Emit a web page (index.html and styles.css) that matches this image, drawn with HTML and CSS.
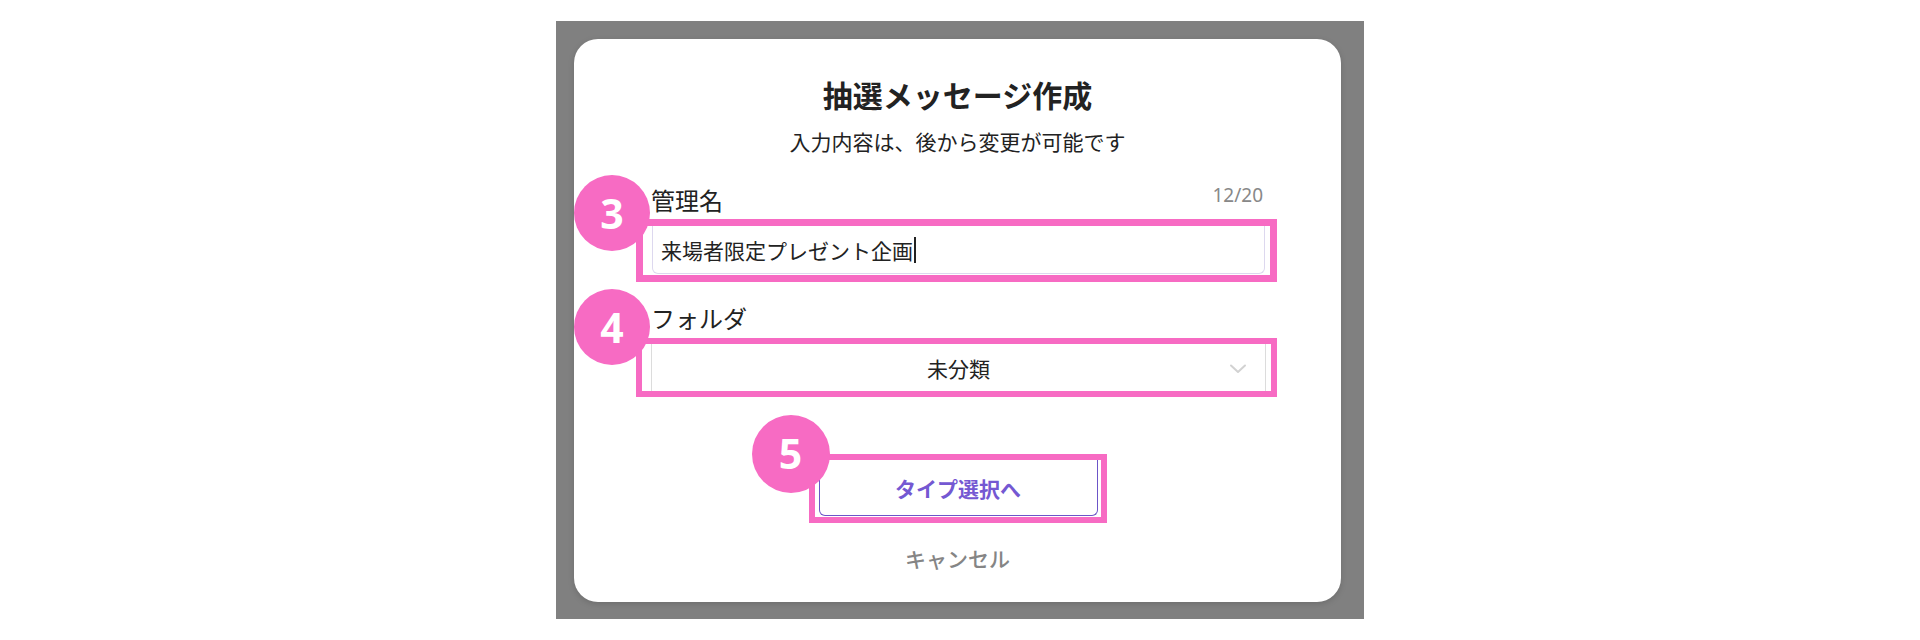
FILE: index.html
```html
<!DOCTYPE html>
<html lang="ja">
<head>
  <meta charset="UTF-8" />
  <title>抽選メッセージ作成</title>
  <link rel="stylesheet" href="styles.css">
</head>
<body>

  <!-- Dimmed backdrop with the modal on top -->
  <div class="backdrop">
    <div class="modal">
      <h1 class="modal-title">抽選メッセージ作成</h1>
      <p class="modal-sub">入力内容は、後から変更が可能です</p>

      <!-- Management name -->
      <div class="field field-name">
        <div class="field-head">
          <span class="field-label">管理名</span>
          <span class="counter">12/20</span>
        </div>
        <div class="mark mark-name">
          <span class="step step-3">3</span>
          <div class="text-input">来場者限定プレゼント企画<span class="caret"></span></div>
        </div>
      </div>

      <!-- Folder -->
      <div class="field field-folder">
        <div class="field-head">
          <span class="field-label">フォルダ</span>
        </div>
        <div class="mark mark-folder">
          <span class="step step-4">4</span>
          <div class="select">
            <span>未分類</span>
            <svg class="chevron" width="18" height="10" viewBox="0 0 18 10">
              <path d="M2 1.5 L9 8 L16 1.5" fill="none" stroke="#d2d2d2" stroke-width="2" stroke-linecap="round" stroke-linejoin="round"/>
            </svg>
          </div>
        </div>
      </div>

      <!-- Next step -->
      <div class="mark mark-btn">
        <span class="step step-5">5</span>
        <button class="next-btn">タイプ選択へ</button>
      </div>

      <div class="cancel">キャンセル</div>
    </div>
  </div>

</body>
</html>
```

FILE: styles.css
```css
/* Page and backdrop */
body {
  margin: 0;
  background: #ffffff;
  font-family: "Noto Sans CJK JP", "Noto Sans", sans-serif;
  color: #222222;
}

.backdrop {
  width: 808px;
  box-sizing: border-box;
  margin: 21px auto 0;
  padding: 18px 23px 17px 18px;
  background: #808080;
}

/* Modal card */
.modal {
  background: #ffffff;
  border-radius: 24px;
  padding: 35px 0 30px;
  box-shadow: 0 2px 6px rgba(0,0,0,0.15);
}

.modal-title {
  margin: 0;
  text-align: center;
  font-size: 30px;
  line-height: 40px;
  font-weight: 700;
  color: #222;
}

.modal-sub {
  margin: 13px 0 0;
  text-align: center;
  font-size: 21px;
  line-height: 28px;
  color: #222;
}

/* Form fields */
.field {
  margin: 0 64px 0 62px;
}

.field-name {
  margin-top: 30px;
}

.field-folder {
  margin-top: 21px;
}

.field-head {
  display: flex;
  justify-content: space-between;
  align-items: center;
  padding: 0 14px 0 15px;
  height: 30px;
}

.field-label {
  font-size: 24px;
  line-height: 30px;
  color: #222;
}

.counter {
  font-family: "Noto Sans", sans-serif;
  font-size: 19px;
  color: #888;
  margin-top: -10px;
}

/* Pink annotation frames */
.mark {
  position: relative;
  border: 7px solid #f76bc3;
}

.mark-name {
  margin-top: 4px;
  padding: 0 5px 1px 9px;
}

.mark-folder {
  margin-top: 5px;
  border-width: 6px;
  padding: 0 5px 0 9px;
}

.mark-btn {
  width: 298px;
  box-sizing: border-box;
  margin: 57px auto 0;
  border-width: 6px;
  padding: 0 3px 1px 4px;
}

/* Numbered badges */
.step {
  position: absolute;
  z-index: 2;
  width: 76px;
  height: 76px;
  border-radius: 50%;
  background: #f76bc3;
  color: #ffffff;
  font-family: "Noto Sans", sans-serif;
  font-weight: 700;
  font-size: 41px;
  line-height: 76px;
  text-align: center;
}

.step-3 {
  left: -69px;
  top: -51px;
}

.step-4 {
  left: -68px;
  top: -55px;
}

.step-5 {
  left: -63px;
  top: -45px;
  width: 78px;
  height: 78px;
  line-height: 76px;
}

/* Inputs */
.text-input {
  height: 48px;
  box-sizing: border-box;
  border: 1px solid #ddd8ef;
  border-top: none;
  border-radius: 0 0 6px 6px;
  background: #fff;
  padding-left: 8px;
  display: flex;
  align-items: center;
  font-size: 21px;
  color: #222;
}

.caret {
  display: inline-block;
  width: 2px;
  height: 26px;
  background: #222;
  margin-left: 1px;
}

.select {
  position: relative;
  height: 47px;
  box-sizing: border-box;
  border-left: 1px solid #dcdcdc;
  border-right: 1px solid #dcdcdc;
  background: #fff;
  display: flex;
  align-items: center;
  justify-content: center;
  font-size: 21px;
  color: #222;
}

.chevron {
  position: absolute;
  right: 18px;
  top: 20px;
}

/* Buttons */
.next-btn {
  display: block;
  width: 100%;
  height: 56px;
  border: 1.5px solid #6c55c8;
  border-top: none;
  border-radius: 0 0 6px 6px;
  background: #fff;
  color: #7458d2;
  font-family: "Noto Sans CJK JP", sans-serif;
  font-size: 21px;
  font-weight: 700;
}

.cancel {
  margin-top: 21px;
  text-align: center;
  font-size: 21px;
  line-height: 28px;
  font-weight: 500;
  color: #858585;
}
```
